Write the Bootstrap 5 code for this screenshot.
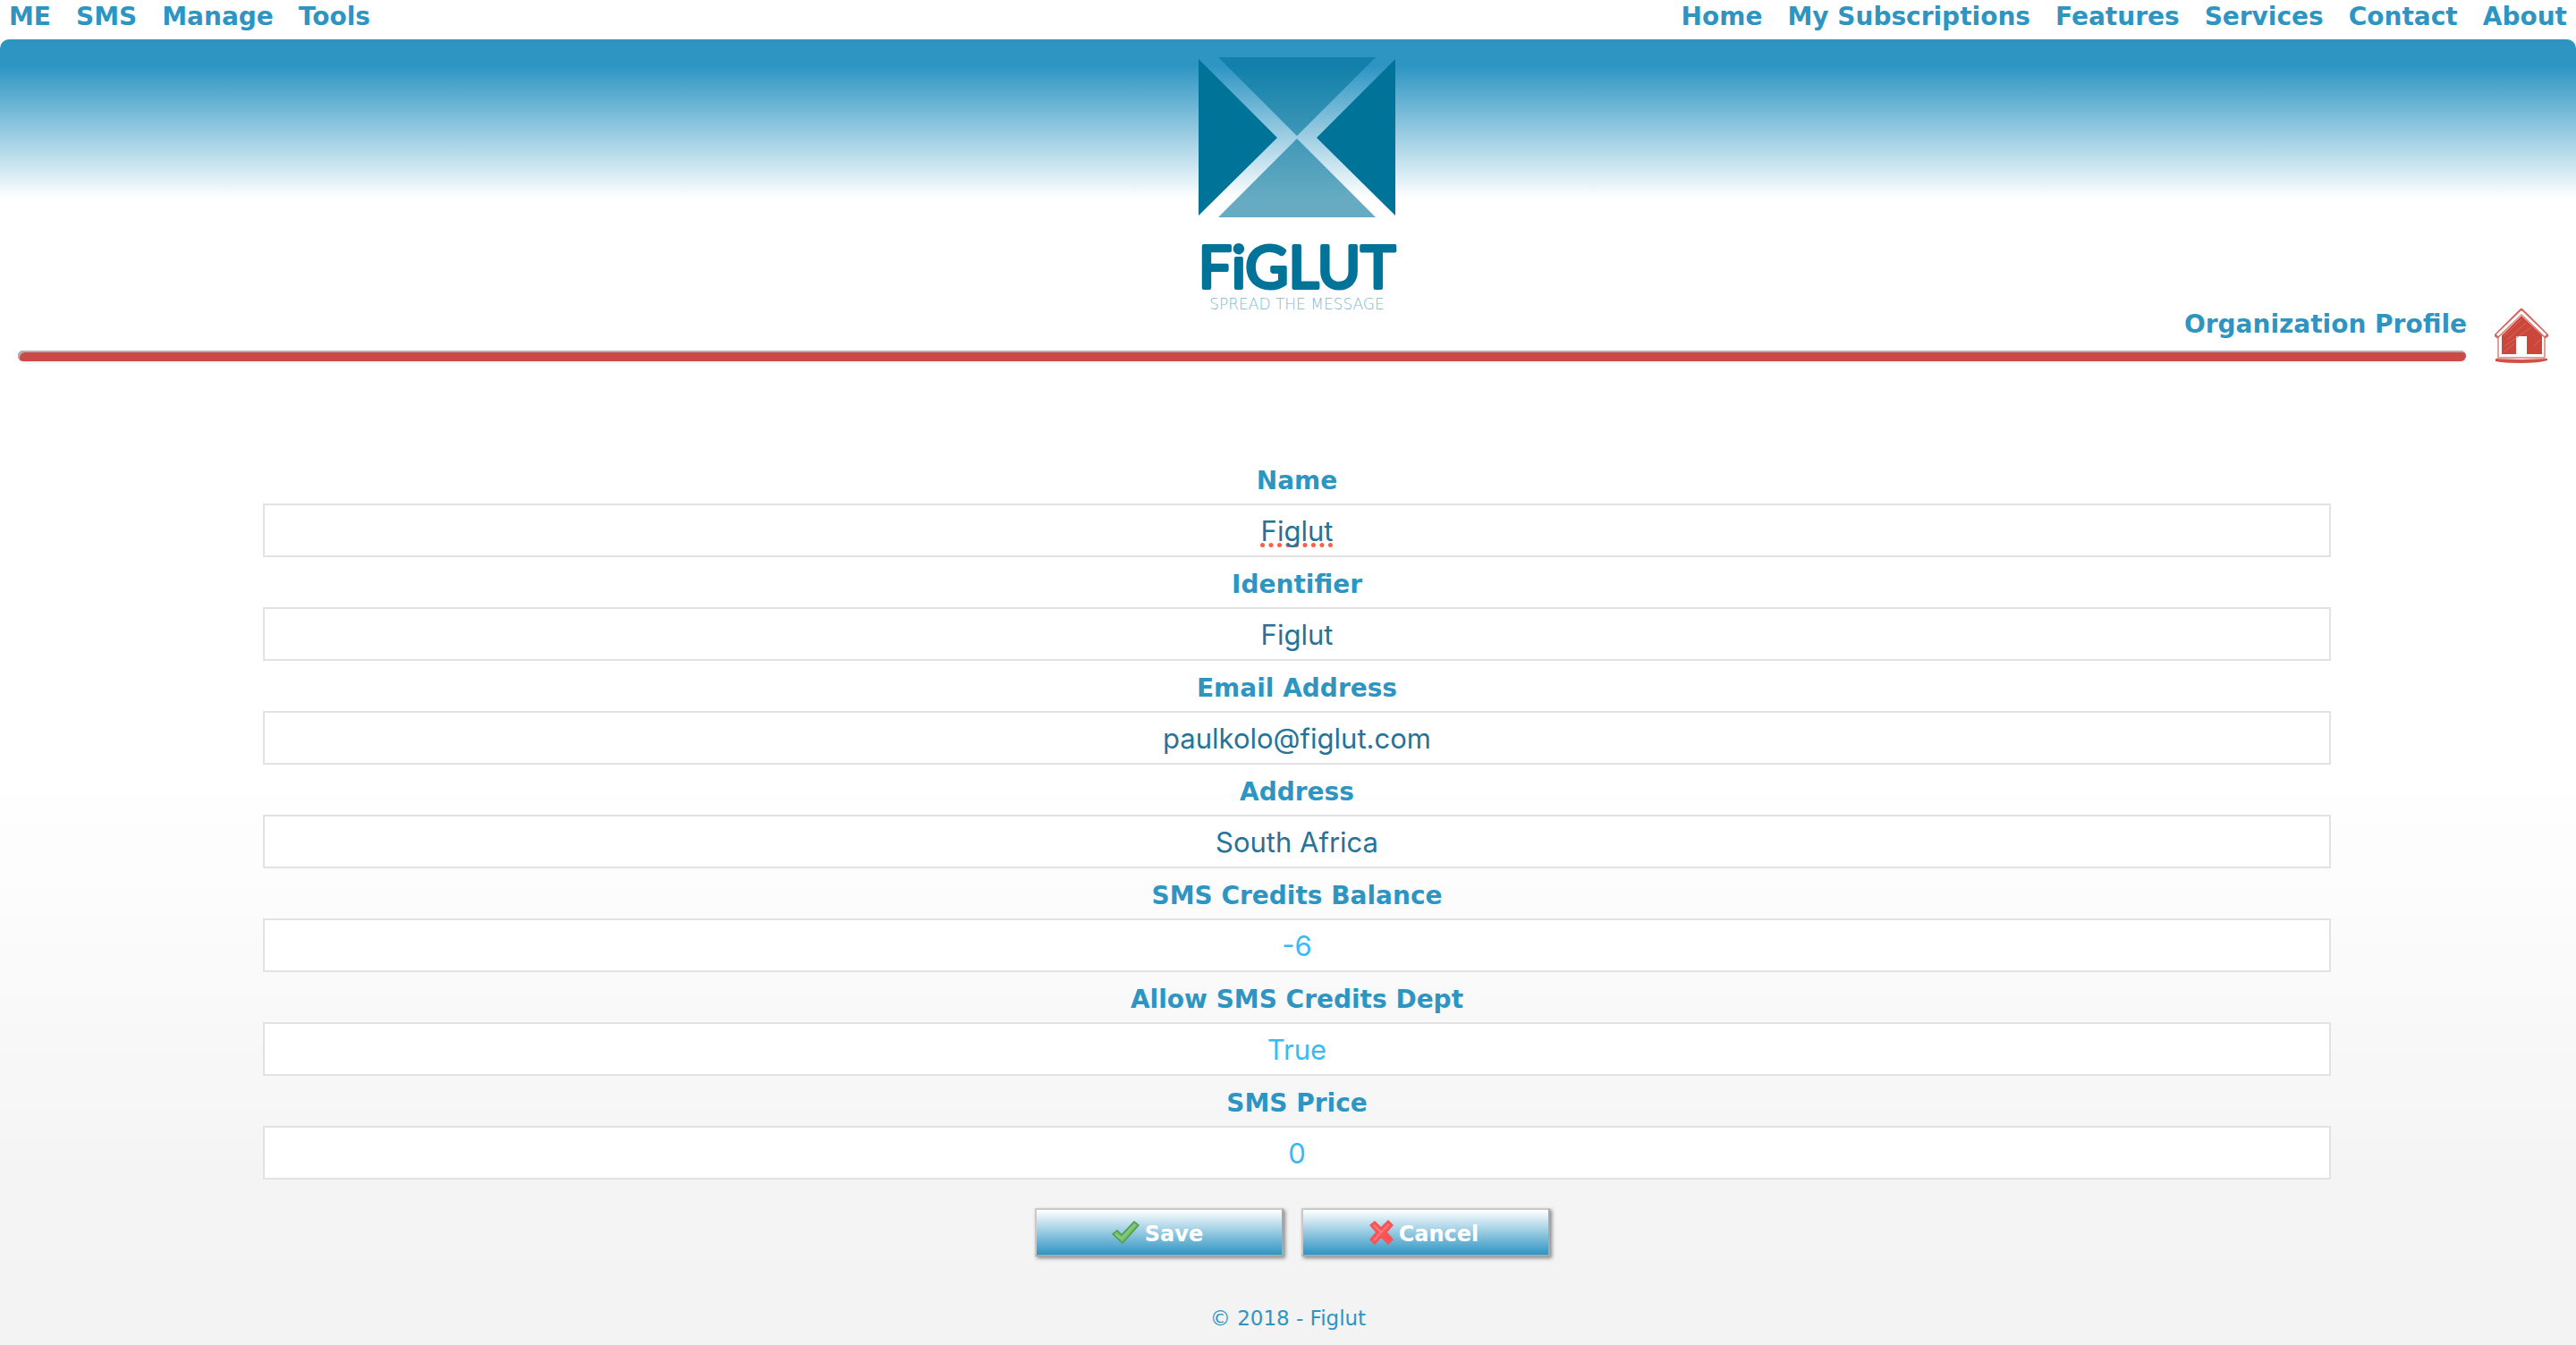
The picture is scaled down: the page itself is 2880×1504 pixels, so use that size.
<!DOCTYPE html>
<html lang="en">
<head>
<meta charset="utf-8">
<meta name="viewport" content="width=device-width, initial-scale=1">
<title>Organization Profile - Figlut</title>
<link href="https://cdn.jsdelivr.net/npm/bootstrap@5.3.0/dist/css/bootstrap.min.css" rel="stylesheet">
<style>
:root { --brand: #2e95c3; --brand-dark: #007399; }
body {
  min-height: 100vh;
  font-family: Verdana, "DejaVu Sans", sans-serif;
  font-size: 28px;
  color: var(--brand);
  background: linear-gradient(#fff 57%, #fcfcfc 66%, #f4f4f4 88%, #f3f3f3 94%) #f3f3f3;
}
.site-nav { height: 44px; padding: 0 10px; font-weight: 700; line-height: 38px; }
.site-nav ul { gap: 28px; }
.site-nav a { color: inherit; text-decoration: none; }
.masthead {
  padding: 20px 0 0 20px;
  border-radius: 10px 10px 0 0;
  background: linear-gradient(var(--brand) 30px, #fff 178px);
}
.masthead-grid { display: grid; grid-template-columns: 1fr auto 1fr; padding-right: 31px; }
.brand-cell { grid-column: 2; padding: 0 0 42px 31px; }
.brand-cell svg { overflow: visible; }
.title-cell { gap: 31px; }
.page-title { font-size: 28px; font-weight: 700; line-height: 36px; margin: 0 0 11px; }
.home-link { margin-bottom: -16px; }
.rule-bar {
  height: 12px; margin-right: 123px; border-radius: 6px; background: #cb4947;
  box-shadow: inset 2px 2px 0 #b0b0b0, 0 2px 0 #f2f2f2;
}
.profile-form { padding: 103px 274px 0 294px; }
.profile-form label { font-weight: 700; line-height: 50px; padding-top: 6px; }
.profile-form .form-control {
  height: 60px; padding: 0 12px; border: 2px solid #e2e2e2; border-radius: 0; background: #fff;
  font-family: Inter, "Liberation Sans", sans-serif; font-size: 31px; line-height: 56px;
  color: #257399;
}
.profile-form .form-control[readonly] { color: #3bb9f5; }
.profile-form .misspelt { text-decoration: underline dotted #ff5f48 5px; text-underline-offset: 2px; text-decoration-skip-ink: none; }
.form-actions { gap: 20px; padding: 32px 10px 0 0; }
.form-actions .btn {
  width: 278px; height: 54px; padding: 4px 4px 0 0; gap: 6px;
  border: 2px solid; border-color: #c9c9c9 #a8a8a8 #a8a8a8 #c9c9c9; border-radius: 0;
  background: linear-gradient(#fff, var(--brand));
  box-shadow: 2px 2px 4px #888;
  color: #fff; font-size: 24px; font-weight: 700; line-height: 30px;
}
.site-footer { font-size: 23px; line-height: 30px; padding: 54px 0 15px; }
</style>
</head>
<body class="d-flex flex-column">
<nav class="site-nav d-flex justify-content-between" aria-label="Main">
  <ul class="list-unstyled d-flex m-0">
    <li><a href="#">ME</a></li>
    <li><a href="#">SMS</a></li>
    <li><a href="#">Manage</a></li>
    <li><a href="#">Tools</a></li>
  </ul>
  <ul class="list-unstyled d-flex m-0">
    <li><a href="#">Home</a></li>
    <li><a href="#">My Subscriptions</a></li>
    <li><a href="#">Features</a></li>
    <li><a href="#">Services</a></li>
    <li><a href="#">Contact</a></li>
    <li><a href="#">About</a></li>
  </ul>
</nav>

<header class="masthead">
  <div class="masthead-grid">
    <div class="brand-cell">
      <svg class="d-block" width="220" height="286" viewBox="0 0 220 286" role="img" aria-label="Figlut, spread the message">
        <path d="M0 2 88 90 0 177ZM220 2 132 90 220 177Z" fill="#007399"/>
        <path d="M22 0H198L110 88Z" fill="#007399" fill-opacity=".6"/>
        <path d="M110 91 198 179H22Z" fill="#007399" fill-opacity=".6"/>
        <text x="110" y="258" text-anchor="middle" font-family="Lato, sans-serif" font-size="66" font-weight="400" fill="#007399" stroke="#007399" stroke-width="4" stroke-linejoin="round">FiGLUT</text>
        <text x="110" y="282" text-anchor="middle" font-family="DejaVu Sans, sans-serif" font-size="17" font-weight="200" fill="#7fb9cc">SPREAD THE MESSAGE</text>
      </svg>
    </div>
    <div class="title-cell d-flex justify-content-end align-items-end">
      <h1 class="page-title">Organization Profile</h1>
      <a class="home-link" href="#" aria-label="Home">
        <svg class="d-block" width="60" height="64" viewBox="0 0 60 64">
          <path d="M4 30V56H56V30L30 6Z" fill="#fff" stroke="#e2a09b" stroke-width="2"/>
          <path d="M30 9 53 31V52H36V32H24V52H8V31Z" fill="#cb463b"/>
          <path d="M11 31 30 13M14 36 35 17M11 43 41 22M10 50 22 40M44 43 51 36" stroke="#d66a61" stroke-width="1"/>
          <path d="M3 31 30 4 57 31" fill="none" stroke="#d2665e" stroke-width="6" stroke-linejoin="round" stroke-linecap="round"/>
          <path d="M3 31 30 5 57 31" fill="none" stroke="#fff" stroke-width="3" stroke-linejoin="round"/>
          <path d="M1 57 30 58 59 57V59Q50 62 30 62Q8 62 1 60Z" fill="#cf5148"/>
        </svg>
      </a>
    </div>
  </div>
  <div class="rule-bar"></div>
</header>

<main>
  <form class="profile-form text-center">
    <label class="d-block" for="name">Name</label>
    <input class="form-control text-center misspelt" id="name" type="text" value="Figlut">
    <label class="d-block" for="identifier">Identifier</label>
    <input class="form-control text-center" id="identifier" type="text" value="Figlut">
    <label class="d-block" for="email">Email Address</label>
    <input class="form-control text-center" id="email" type="email" value="paulkolo@figlut.com">
    <label class="d-block" for="address">Address</label>
    <input class="form-control text-center" id="address" type="text" value="South Africa">
    <label class="d-block" for="balance">SMS Credits Balance</label>
    <input class="form-control text-center" id="balance" type="text" value="-6" readonly>
    <label class="d-block" for="allow">Allow SMS Credits Dept</label>
    <input class="form-control text-center" id="allow" type="text" value="True" readonly>
    <label class="d-block" for="price">SMS Price</label>
    <input class="form-control text-center" id="price" type="text" value="0" readonly>
    <div class="form-actions d-flex justify-content-center">
      <button class="btn d-flex align-items-center justify-content-center" type="submit">
        <svg width="31" height="30" viewBox="0 0 31 30" aria-hidden="true">
          <path d="M1 15 6 11 11 16 25 1 30 5 12 25Z" fill="#74bf6a" stroke="#4f9a50" stroke-width="1.5" stroke-linejoin="round"/>
          <path d="M4 15 11 20 26 4" fill="none" stroke="#86ca7b" stroke-width="2"/>
        </svg>
        <span>Save</span>
      </button>
      <button class="btn d-flex align-items-center justify-content-center" type="button">
        <svg width="27" height="32" viewBox="0 0 27 32" aria-hidden="true">
          <path d="M1 6 6 2 13 9 21 1 26 6 19 14 26 22 21 27 13 19 6 27 1 22 8 14Z" fill="#fb5357" stroke="#f0565a" stroke-width="1.5" stroke-linejoin="round"/>
          <path d="M5 6 13 14 22 5M5 23 13 14" fill="none" stroke="#ff7a7a" stroke-width="2"/>
        </svg>
        <span>Cancel</span>
      </button>
    </div>
  </form>
</main>

<footer class="site-footer text-center">© 2018 - Figlut</footer>
<script src="https://cdn.jsdelivr.net/npm/bootstrap@5.3.0/dist/js/bootstrap.bundle.min.js"></script>
</body>
</html>
